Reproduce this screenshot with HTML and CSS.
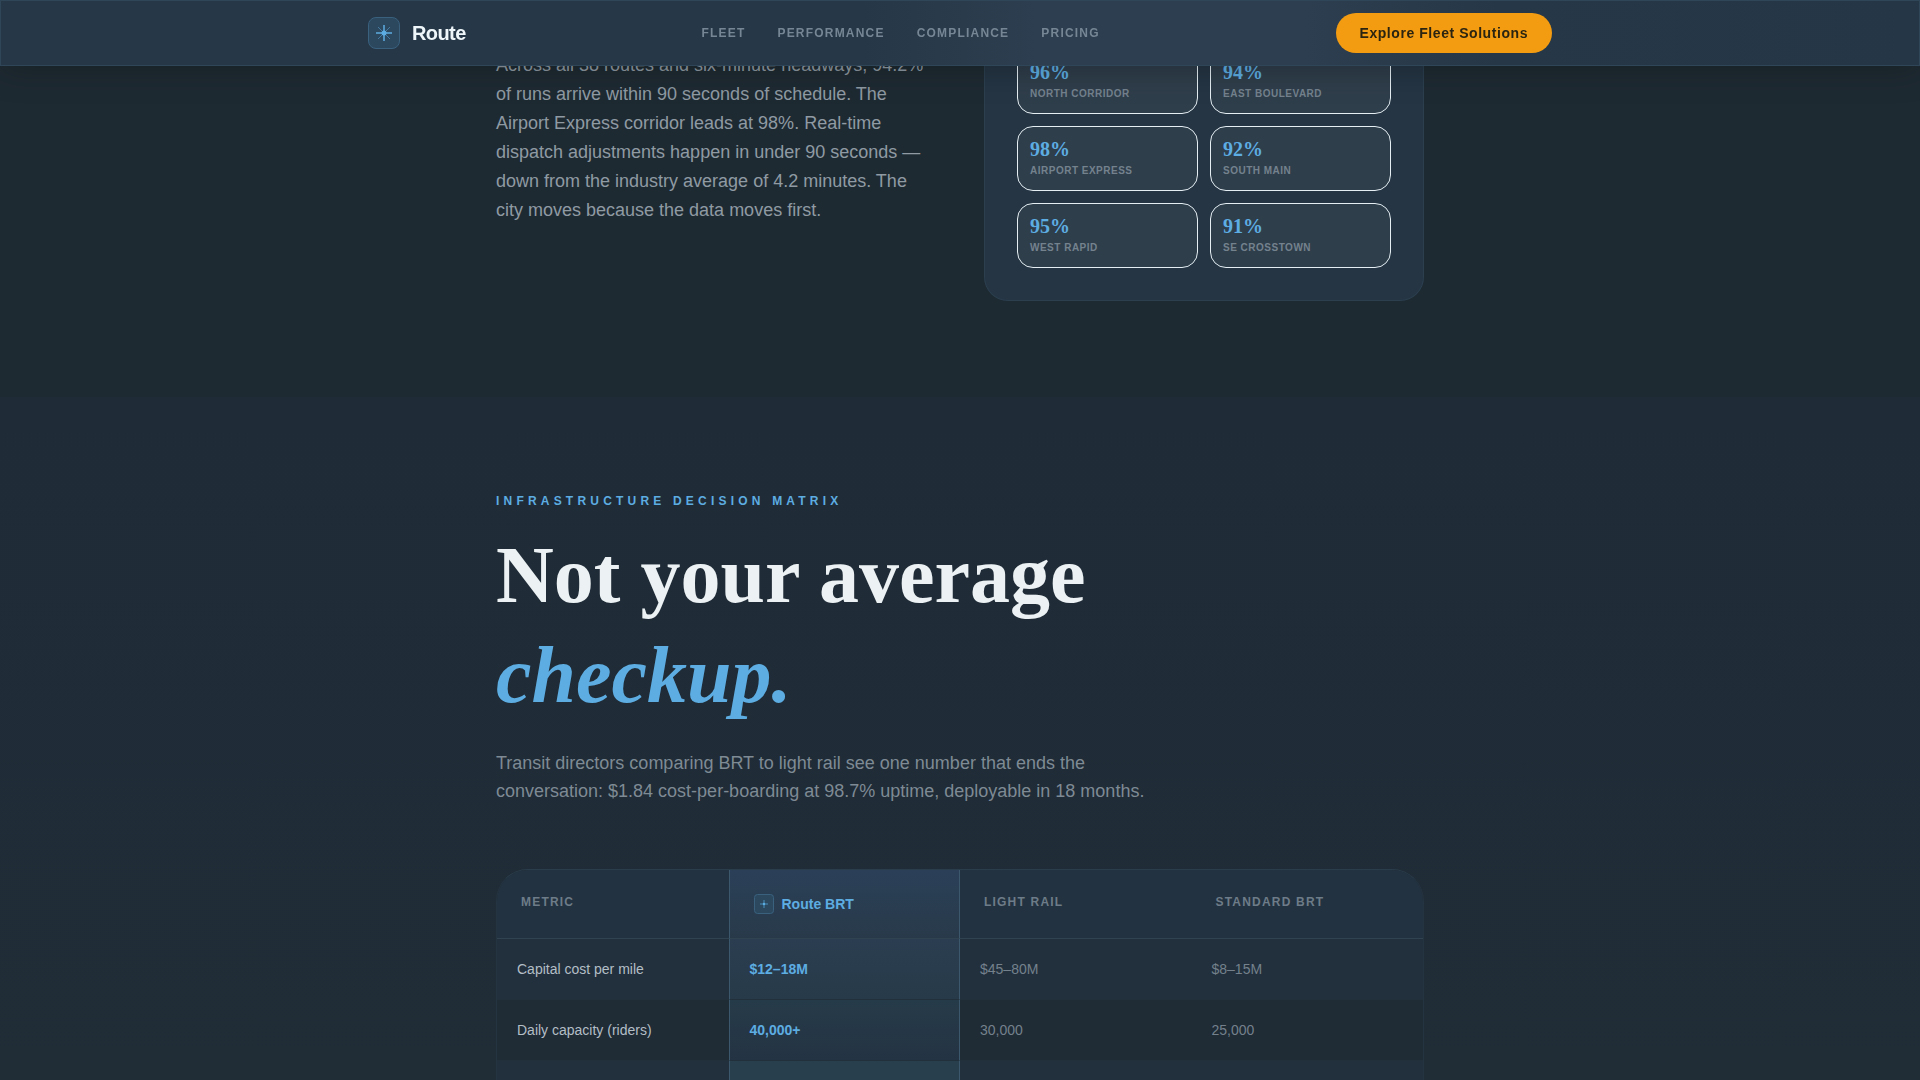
FILE: index.html
```
<!DOCTYPE html>
<html lang="en">
  <head>
    <meta charset="UTF-8" />
    <meta name="viewport" content="width=device-width, initial-scale=1.0" />
    <title>Route</title>
    <link rel="stylesheet" href="styles.css">
  </head>
  <body>
    <!-- Navigation -->
    <header class="navbar">
      <div class="nav-inner">
        <a class="logo" href="#">
          <svg class="logo-mark" viewBox="0 0 32 32" aria-hidden="true">
            <rect class="mark-box" x="0.5" y="0.5" width="31" height="31" rx="7.5" />
            <path class="mark-cross" d="M16 8v16M8 16h16" />
            <path class="mark-rays" d="M10 10l12 12M22 10l-12 12" />
            <circle class="mark-dot" cx="16" cy="16" r="2.5" />
          </svg>
          <span>Route</span>
        </a>
        <nav class="nav-links">
          <a href="#fleet">Fleet</a>
          <a href="#performance">Performance</a>
          <a href="#compliance">Compliance</a>
          <a href="#pricing">Pricing</a>
        </nav>
        <button class="cta" type="button">Explore Fleet Solutions</button>
      </div>
    </header>

    <!-- Performance Section -->
    <section class="performance" id="performance">
      <div class="container split">
        <p class="copy">Across all 38 routes and six-minute headways, 94.2% of runs arrive within 90 seconds of schedule. The Airport Express corridor leads at 98%. Real-time dispatch adjustments happen in under 90 seconds — down from the industry average of 4.2 minutes. The city moves because the data moves first.</p>
        <div class="card">
          <div class="cell"><strong>96%</strong><span>North Corridor</span></div>
          <div class="cell"><strong>94%</strong><span>East Boulevard</span></div>
          <div class="cell"><strong>98%</strong><span>Airport Express</span></div>
          <div class="cell"><strong>92%</strong><span>South Main</span></div>
          <div class="cell"><strong>95%</strong><span>West Rapid</span></div>
          <div class="cell"><strong>91%</strong><span>SE Crosstown</span></div>
        </div>
      </div>
    </section>

    <!-- Comparison Section -->
    <section class="matrix" id="compliance">
      <div class="container">
        <p class="eyebrow">Infrastructure Decision Matrix</p>
        <h2>Not your average<br><em>checkup.</em></h2>
        <p class="lead">Transit directors comparing BRT to light rail see one number that ends the conversation: $1.84 cost-per-boarding at 98.7% uptime, deployable in 18 months.</p>
        <div class="table-wrap">
          <table>
            <thead>
              <tr>
                <th scope="col">Metric</th>
                <th scope="col" class="route">
                  <div class="brand">
                    <svg viewBox="0 0 20 20" aria-hidden="true">
                      <rect class="mark-box" x="0.5" y="0.5" width="19" height="19" rx="3" />
                      <path class="small-cross" d="M10 6v8M6 10h8" />
                      <circle class="mark-dot" cx="10" cy="10" r="1.2" />
                    </svg>
                    <span>Route BRT</span>
                  </div>
                </th>
                <th scope="col">Light Rail</th>
                <th scope="col">Standard BRT</th>
              </tr>
            </thead>
            <tbody>
              <tr>
                <td>Capital cost per mile</td>
                <td class="route">$12–18M</td>
                <td>$45–80M</td>
                <td>$8–15M</td>
              </tr>
              <tr>
                <td>Daily capacity (riders)</td>
                <td class="route">40,000+</td>
                <td>30,000</td>
                <td>25,000</td>
              </tr>
              <tr class="last">
                <td></td>
                <td class="route"></td>
                <td></td>
                <td></td>
              </tr>
            </tbody>
          </table>
        </div>
      </div>
    </section>
  </body>
</html>
```
FILE: styles.css
```
* {
  box-sizing: border-box;
}
body {
  margin: 0;
  background-color: #1f2b36;
  color: #ecf2f4;
  font-family: "Liberation Sans", Arial, sans-serif;
}
p, h2 {
  margin: 0;
}
.container {
  max-width: 928px;
  margin: 0 auto;
}

/* Navigation */
.navbar {
  position: fixed;
  top: 0;
  left: 0;
  right: 0;
  z-index: 10;
  padding: 12px 24px;
  border: 1px solid #2f4658;
  background: linear-gradient(90deg, #263747 0%, #263747 45%, #2d3e50 54%, #2d3e50 68%, #263747 78%, #253646 100%);
  box-shadow: 0 4px 32px rgba(0, 0, 0, 0.25);
}
.nav-inner {
  display: flex;
  align-items: center;
  justify-content: space-between;
  max-width: 1184px;
  margin: 0 auto;
}
.logo {
  display: flex;
  align-items: center;
  gap: 12px;
  color: #eef6fa;
  font-size: 20px;
  font-weight: bold;
  letter-spacing: -0.03em;
  text-decoration: none;
}
.logo-mark {
  width: 32px;
  height: 32px;
}
.mark-box {
  fill: #2b485f;
  stroke: #3a617e;
}
.mark-cross {
  stroke: #5dade2;
  stroke-width: 2;
  opacity: 0.75;
}
.mark-rays {
  stroke: #5dade2;
  stroke-width: 1;
  opacity: 0.5;
}
.mark-dot {
  fill: #5dade2;
}
.small-cross {
  stroke: #5dade2;
  stroke-width: 1;
  opacity: 0.7;
}
.nav-links {
  display: flex;
  gap: 32px;
}
.nav-links a {
  color: #768694;
  font-size: 12px;
  font-weight: bold;
  letter-spacing: 0.1em;
  text-decoration: none;
  text-transform: uppercase;
}
.cta {
  height: 40px;
  padding: 0 24px;
  border: 0;
  border-radius: 20px;
  background-color: #f39c12;
  color: #2a2410;
  font-family: inherit;
  font-size: 14px;
  font-weight: bold;
  letter-spacing: 0.04em;
}

/* Performance */
.performance {
  padding-bottom: 96px;
  background-color: #1e2a32;
}
.split {
  display: grid;
  grid-template-columns: 1fr 1fr;
  gap: 48px;
}
.copy {
  padding-top: 51px;
  color: #8f9aa3;
  font-size: 18px;
  line-height: 29px;
}
.card {
  display: grid;
  grid-template-columns: 1fr 1fr;
  gap: 12px;
  padding: 49px 32px 32px;
  border: 1px solid #2b3f4f;
  border-top: 0;
  border-radius: 0 0 24px 24px;
  background-color: #253544;
}
.cell {
  display: flex;
  flex-direction: column;
  gap: 4px;
  padding: 12px;
  border: 1px solid #e4eef3;
  border-radius: 16px;
  background-color: #2f3e4b;
}
.cell strong {
  color: #5dade2;
  font-family: "Liberation Serif", "Times New Roman", serif;
  font-size: 20px;
  line-height: 20px;
}
.cell span {
  color: #74828e;
  font-size: 10px;
  font-weight: bold;
  letter-spacing: 0.05em;
  line-height: 15px;
  text-transform: uppercase;
}

/* Comparison */
.matrix {
  padding-top: 96px;
  background: linear-gradient(#1f2b37, #202c36);
}
.eyebrow {
  margin-bottom: 16px;
  color: #5dade2;
  font-size: 12px;
  font-weight: bold;
  letter-spacing: 0.35em;
  line-height: 16px;
  text-transform: uppercase;
}
h2 {
  font-family: "Liberation Serif", "Times New Roman", serif;
  font-size: 80px;
  line-height: 100px;
}
h2 em {
  color: #5dade2;
}
.lead {
  max-width: 672px;
  margin: 24px 0 64px;
  color: #7e8a94;
  font-size: 18px;
  line-height: 28px;
}
.table-wrap {
  overflow: hidden;
  border: 1px solid #243441;
  border-top-color: #2a3d4b;
  border-bottom: 0;
  border-radius: 32px 32px 0 0;
}
table {
  width: 100%;
  table-layout: fixed;
  border-collapse: separate;
  border-spacing: 0;
}
th {
  padding: 24px;
  border-bottom: 1px solid #2f4351;
  background-color: #233240;
  color: #6d7c88;
  font-size: 12px;
  letter-spacing: 0.1em;
  line-height: 16px;
  text-align: left;
  text-transform: uppercase;
  vertical-align: top;
}
td {
  padding: 20px;
  border-bottom: 1px solid #22303c;
  background-color: #22303d;
  color: #74818c;
  font-size: 14px;
  line-height: 20px;
}
td:first-child {
  color: #b3bec6;
}
tr:nth-child(even) td {
  background-color: #1f2b35;
}
.last td {
  height: 20px;
  padding: 0;
  border-bottom: 0;
}
th.route,
td.route {
  border-left: 1px solid #3b586d;
  border-right: 1px solid #3b586d;
  color: #5dade2;
}
th.route {
  background: linear-gradient(#2b4058, #283a4a);
}
td.route {
  background: linear-gradient(#2b3e51, #263a49);
  font-weight: bold;
}
tr:nth-child(even) td.route {
  background: linear-gradient(#263b49, #243343);
}
.last td.route {
  background: #283f4e;
}
.brand {
  display: flex;
  align-items: center;
  gap: 8px;
  font-size: 14px;
  letter-spacing: 0;
  line-height: 20px;
  text-transform: none;
}
.brand svg {
  width: 20px;
  height: 20px;
}
```
